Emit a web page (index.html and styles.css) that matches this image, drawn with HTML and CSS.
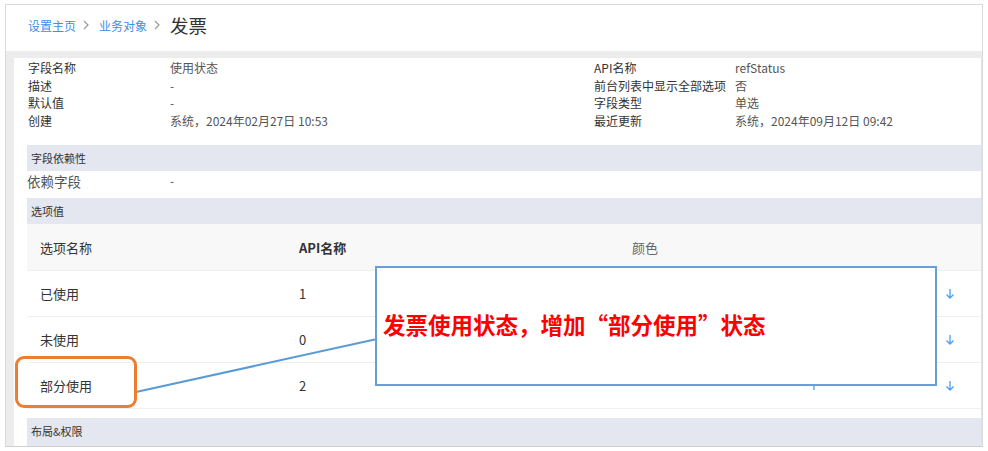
FILE: index.html
```html
<!DOCTYPE html>
<html lang="zh-CN">
<head>
<meta charset="UTF-8">
<title>发票 - 使用状态</title>
<link rel="stylesheet" href="styles.css">
</head>
<body>

<div class="frame">
    <!-- 面包屑 -->
    <div class="crumbs">
        <a class="crumb-link">设置主页</a>
        <svg class="chev" viewBox="0 0 6 10"><path d="M1 1 L5 5 L1 9"/></svg>
        <a class="crumb-link">业务对象</a>
        <svg class="chev" viewBox="0 0 6 10"><path d="M1 1 L5 5 L1 9"/></svg>
        <span class="crumb-current">发票</span>
    </div>

    <div class="body-wrap">
        <div class="panel">
            <div class="details">
                <span class="lbl">字段名称</span><span class="val">使用状态</span>
                <span class="lbl">API名称</span><span class="val">refStatus</span>
                <span class="lbl">描述</span><span class="val">-</span>
                <span class="lbl">前台列表中显示全部选项</span><span class="val">否</span>
                <span class="lbl">默认值</span><span class="val">-</span>
                <span class="lbl">字段类型</span><span class="val">单选</span>
                <span class="lbl">创建</span><span class="val">系统，2024年02月27日 10:53</span>
                <span class="lbl">最近更新</span><span class="val">系统，2024年09月12日 09:42</span>
            </div>

            <div class="section-bar">字段依赖性</div>
            <div class="dep-row">
                <span class="dep-lbl">依赖字段</span><span class="val">-</span>
            </div>

            <div class="section-bar">选项值</div>
            <div class="opt-table">
                <div class="opt-row opt-head">
                    <span>选项名称</span>
                    <span class="bold">API名称</span>
                    <span class="muted">颜色</span>
                    <span></span><span></span>
                </div>
                <div class="opt-row">
                    <span>已使用</span><span>1</span><span></span>
                    <span></span>
                    <span class="arrow"><svg viewBox="0 0 10 11"><path d="M5 1 V10 M1.5 6.5 L5 10 L8.5 6.5"/></svg></span>
                </div>
                <div class="opt-row">
                    <span>未使用</span><span>0</span><span></span>
                    <span class="arrow"><svg viewBox="0 0 10 11"><path d="M5 10 V1 M1.5 4.5 L5 1 L8.5 4.5"/></svg></span>
                    <span class="arrow"><svg viewBox="0 0 10 11"><path d="M5 1 V10 M1.5 6.5 L5 10 L8.5 6.5"/></svg></span>
                </div>
                <div class="opt-row">
                    <span>部分使用</span><span>2</span><span></span>
                    <span class="arrow"><svg viewBox="0 0 10 11"><path d="M5 10 V1 M1.5 4.5 L5 1 L8.5 4.5"/></svg></span>
                    <span class="arrow"><svg viewBox="0 0 10 11"><path d="M5 1 V10 M1.5 6.5 L5 10 L8.5 6.5"/></svg></span>
                </div>
            </div>

            <div class="section-bar last">布局&amp;权限</div>
        </div>
    </div>
</div>

<!-- 批注 -->
<svg class="callout-line" viewBox="0 0 988 451"><line x1="136" y1="392" x2="377" y2="339"/></svg>
<div class="note-box">发票使用状态，增加“部分使用”状态</div>
<div class="mark-box"></div>

</body>
</html>
```

FILE: styles.css
```css
/* --- Base --- */
body {
    margin:0;
    background:#fff;
    font-family: "Noto Sans CJK SC", "Noto Sans", sans-serif;
    color:#333;
    position:relative;
    width:988px;
    height:451px;
    overflow:hidden;
}

.frame {
    margin:4px 5px 0 5px;
    height:443px;
    border:1px solid #d9d9d9;
    border-bottom-color:#cfcfcf;
    box-sizing:border-box;
    background:#ececec;
    display:flex;
    flex-direction:column;
    overflow:hidden;
}

/* --- Breadcrumb --- */
.crumbs {
    flex-shrink:0;
    height:46px;
    background:#fff;
    display:flex;
    align-items:center;
    padding-left:22px;
    padding-bottom:6px;
    box-sizing:border-box;
    margin-bottom:7px;
}
.crumb-link { color:#3c8ee8; font-size:12px; }
.crumb-current { color:#333; font-size:18.5px; }
.chev { width:6px; height:10px; margin:0 10px 0 7px; }
.chev path { fill:none; stroke:#999; stroke-width:1.2; }

/* --- Panel --- */
.body-wrap {
    flex:1;
    min-height:0;
    padding-left:8px;
    display:flex;
}
.panel {
    flex:1;
    background:#fff;
    padding-left:13px;
    border-right:1px solid #e2e2e2;
    overflow:hidden;
}

.details {
    display:grid;
    grid-template-columns:142px 424px 141px 1fr;
    font-size:12px;
    line-height:17.6px;
    padding:1px 0 0 1px;
    margin-bottom:16px;
}
.lbl { color:#333; }
.val { color:#555; }

.section-bar {
    background:#e4e7ef;
    height:26px;
    line-height:26px;
    font-size:11px;
    color:#333;
    padding-left:4px;
}
.section-bar.last { margin-top:9px; height:30px; }

.dep-row {
    display:grid;
    grid-template-columns:143px 1fr;
    height:27px;
    line-height:20px;
}
.dep-lbl { font-size:13.5px; color:#555; }
.dep-row .val { font-size:12px; }

/* --- Tabla de opciones --- */
.opt-row {
    display:grid;
    grid-template-columns:259px 333px 177px 136px 1fr;
    align-items:center;
    height:46px;
    box-sizing:border-box;
    border-bottom:1px solid #efefef;
    font-size:13px;
    color:#333;
    padding-left:13px;
}
.opt-head { background:#f8f8f8; height:47px; border-bottom:1px solid #f0f0f0; }
.bold { font-weight:bold; }
.muted { color:#666; }
.arrow svg { width:10px; height:11px; display:block; }
.arrow path { fill:none; stroke:#4a9ff5; stroke-width:1.3; }

/* --- Anotaciones --- */
.callout-line {
    position:absolute;
    left:0; top:0;
    width:988px; height:451px;
}
.callout-line line { stroke:#5b9bd5; stroke-width:2; }

.note-box {
    position:absolute;
    left:375px; top:266px;
    width:562px; height:120px;
    box-sizing:border-box;
    border:2px solid #6b9fd4;
    background:#fff;
    color:#ff0000;
    font-weight:bold;
    font-size:22.5px;
    display:flex;
    align-items:center;
    padding:0 0 4px 6px;
}

.mark-box {
    position:absolute;
    left:15px; top:356px;
    width:122px; height:52px;
    box-sizing:border-box;
    border:3px solid #ed7d31;
    border-radius:9px;
}
```
